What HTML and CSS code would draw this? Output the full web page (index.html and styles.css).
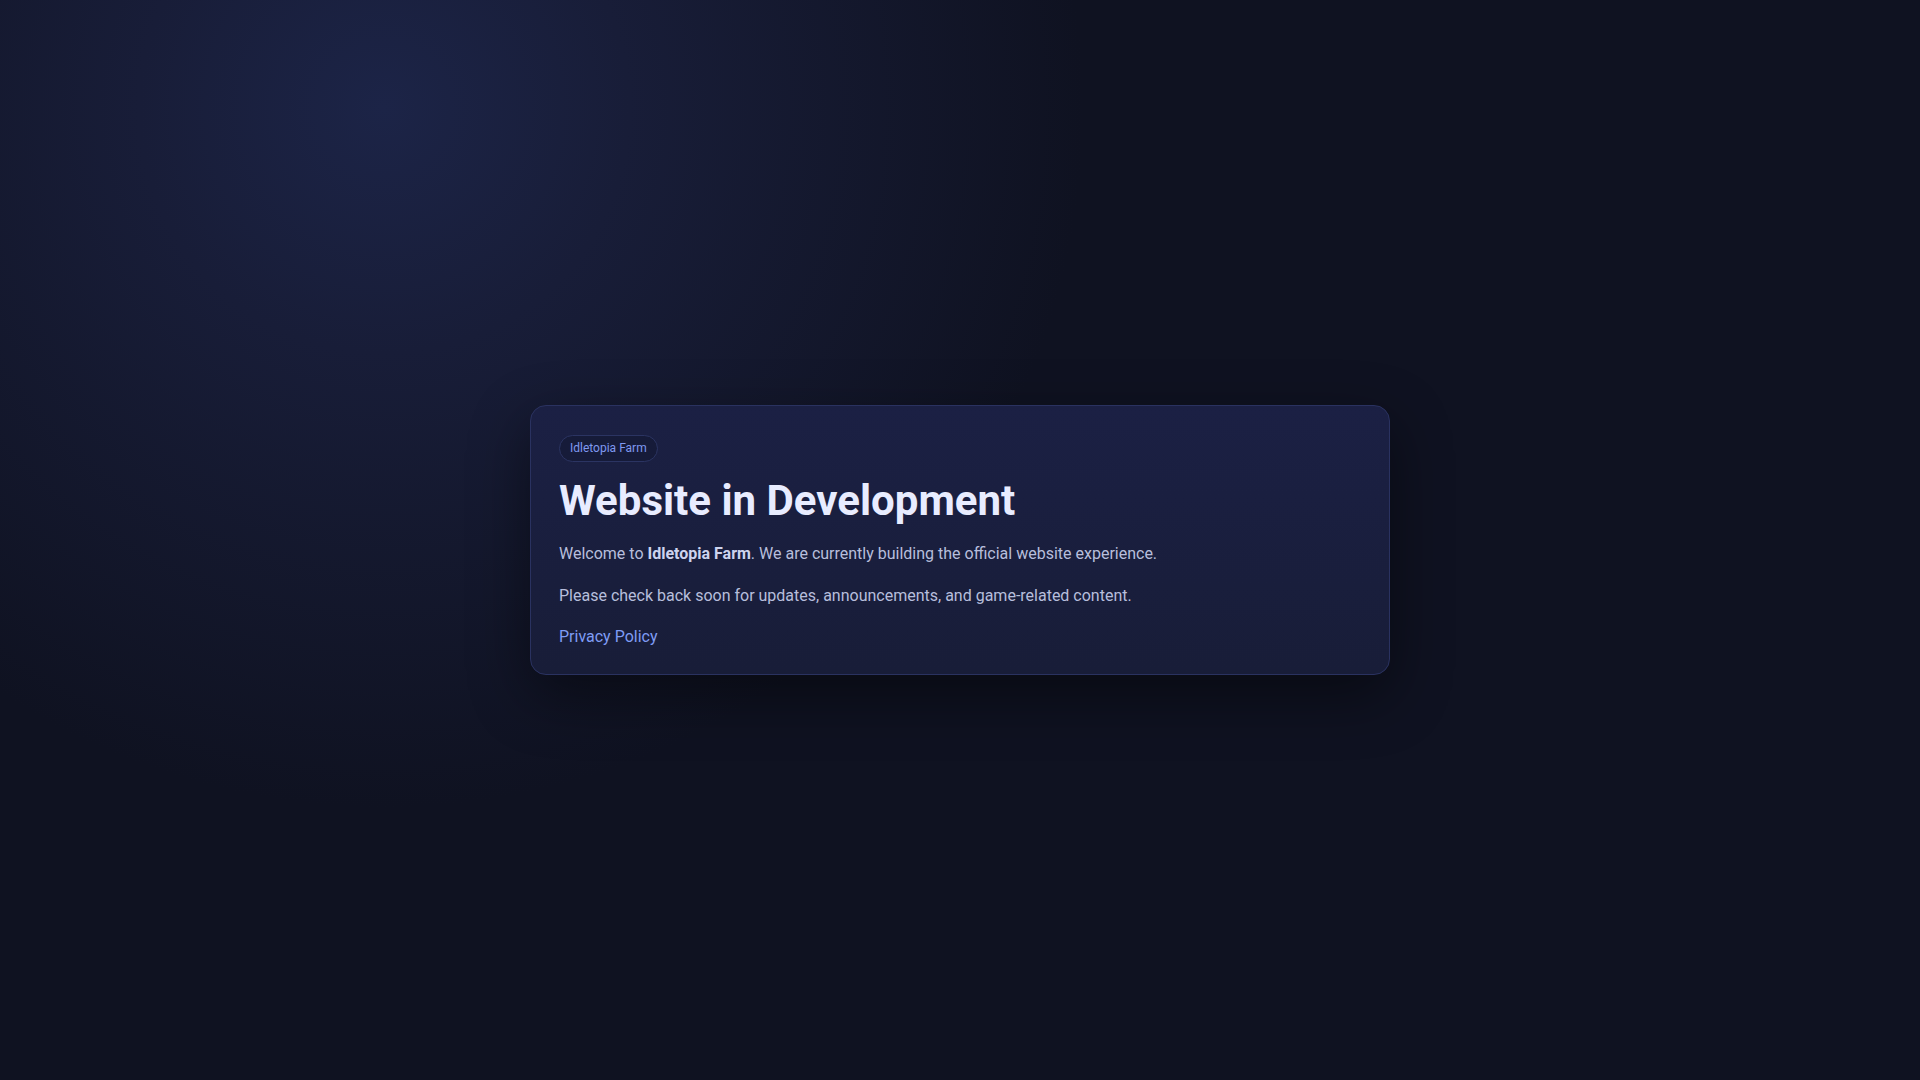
FILE: index.html
```html
<!DOCTYPE html>
<html lang="en">
<head>
<meta charset="utf-8">
<title>Idletopia Farm</title>
<link rel="stylesheet" href="styles.css">
</head>
<body>
<main class="page">
  <section class="card">
    <span class="pill">Idletopia Farm</span>
    <h1 class="title">Website in Development</h1>
    <p class="text">Welcome to <strong>Idletopia Farm</strong>. We are currently building the official website experience.</p>
    <p class="text">Please check back soon for updates, announcements, and game-related content.</p>
    <p class="text links"><a class="link" href="#">Privacy Policy</a></p>
  </section>
</main>
</body>
</html>
```

FILE: styles.css
```css
* { box-sizing: border-box; }
html, body { margin: 0; height: 100%; }
body {
  font-family: Roboto, "Noto Sans", sans-serif;
  background: radial-gradient(circle 700px at 20% 10%, #1c2447 0%, #181d38 35%, rgba(15, 18, 33, 0) 100%), #0f1221;
  color: #b9c0de;
}
.page {
  min-height: 100vh;
  display: flex;
  align-items: center;
  justify-content: center;
  padding: 24px;
}
.card {
  width: 860px;
  padding: 29px 28px 24px;
  border-radius: 16px;
  border: 1px solid #2a3260;
  background: linear-gradient(180deg, #1b2044 0%, #181d38 100%);
  box-shadow: 0 20px 60px rgba(0, 0, 0, 0.45);
  display: flex;
  flex-direction: column;
  align-items: flex-start;
}
.pill {
  font-size: 12px;
  line-height: 17px;
  padding: 4px 10px;
  border: 1px solid #2b3462;
  border-radius: 999px;
  color: #7f98f0;
  background: rgba(20, 25, 52, 0.6);
}
.title {
  margin: 15px 0 16px;
  font-size: 42px;
  line-height: 1.15;
  font-weight: 700;
  color: #e8ecff;
}
.text {
  margin: 0 0 16px;
  font-size: 16px;
  line-height: 1.6;
  color: #b7bedc;
}
.text strong { color: #cdd3ee; font-weight: 700; }
.links { margin: 0; }
.link { color: #7f9cf5; text-decoration: none; }
```
